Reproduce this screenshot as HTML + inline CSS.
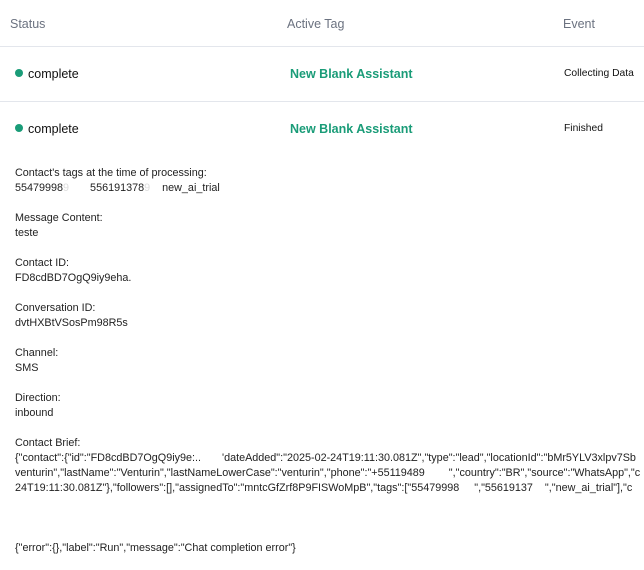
<!DOCTYPE html>
<html><head><meta charset="utf-8"><style>
body{margin:0;width:644px;height:570px;overflow:hidden;background:#fff;font-family:"Liberation Sans",sans-serif;color:#111;position:relative}
.a{position:absolute;white-space:nowrap;line-height:1}
.h{color:#6b7280;font-size:12.5px}
.hr{position:absolute;left:0;width:644px;height:1px;background:#e3e6ec}
.dot{display:inline-block;width:8px;height:8px;border-radius:50%;background:#1a9c78;margin-right:5px;vertical-align:1px}
.st{font-size:12.5px;left:15px}
.tag{font-size:12.5px;font-weight:bold;color:#1a9c78;left:290px}
.ev{font-size:10.3px;left:564px}
.s{font-size:10.8px;left:15px;color:#222}
</style></head><body>
<div class="a h" style="left:10px;top:18px">Status</div>
<div class="a h" style="left:287px;top:18px">Active Tag</div>
<div class="a h" style="left:563px;top:18px">Event</div>
<div class="hr" style="top:46px"></div>
<div class="a st" style="top:68px"><span class="dot"></span>complete</div>
<div class="a tag" style="top:68px">New Blank Assistant</div>
<div class="a ev" style="top:69px">Collecting Data</div>
<div class="hr" style="top:101px"></div>
<div class="a st" style="top:123px"><span class="dot"></span>complete</div>
<div class="a tag" style="top:123px">New Blank Assistant</div>
<div class="a ev" style="top:124px">Finished</div>
<div class="a s" style="top:168px">Contact's tags at the time of processing:</div>
<div class="a s" style="top:183px">55479998<span style="color:#ddd">9</span>&nbsp;&nbsp;&nbsp;&nbsp;&nbsp;&nbsp;&nbsp;556191378<span style="color:#ddd">9</span>&nbsp;&nbsp;&nbsp;&nbsp;new_ai_trial</div>
<div class="a s" style="top:213px">Message Content:</div>
<div class="a s" style="top:228px">teste</div>
<div class="a s" style="top:258px">Contact ID:</div>
<div class="a s" style="top:273px">FD8cdBD7OgQ9iy9eha.</div>
<div class="a s" style="top:303px">Conversation ID:</div>
<div class="a s" style="top:318px">dvtHXBtVSosPm98R5s</div>
<div class="a s" style="top:348px">Channel:</div>
<div class="a s" style="top:363px">SMS</div>
<div class="a s" style="top:393px">Direction:</div>
<div class="a s" style="top:408px">inbound</div>
<div class="a s" style="top:438px">Contact Brief:</div>
<div class="a s" style="top:453px">{"contact":{"id":"FD8cdBD7OgQ9iy9e:..&nbsp;&nbsp;&nbsp;&nbsp;&nbsp;&nbsp;&nbsp;'dateAdded":"2025-02-24T19:11:30.081Z","type":"lead","locationId":"bMr5YLV3xlpv7Sb</div>
<div class="a s" style="top:468px">venturin","lastName":"Venturin","lastNameLowerCase":"venturin","phone":"+55119489&nbsp;&nbsp;&nbsp;&nbsp;&nbsp;&nbsp;&nbsp;&nbsp;","country":"BR","source":"WhatsApp","c</div>
<div class="a s" style="top:483px">24T19:11:30.081Z"},"followers":[],"assignedTo":"mntcGfZrf8P9FISWoMpB","tags":["55479998&nbsp;&nbsp;&nbsp;&nbsp;&nbsp;","55619137&nbsp;&nbsp;&nbsp;&nbsp;","new_ai_trial"],"c</div>
<div class="a s" style="top:543px">{"error":{},"label":"Run","message":"Chat completion error"}</div>
</body></html>
